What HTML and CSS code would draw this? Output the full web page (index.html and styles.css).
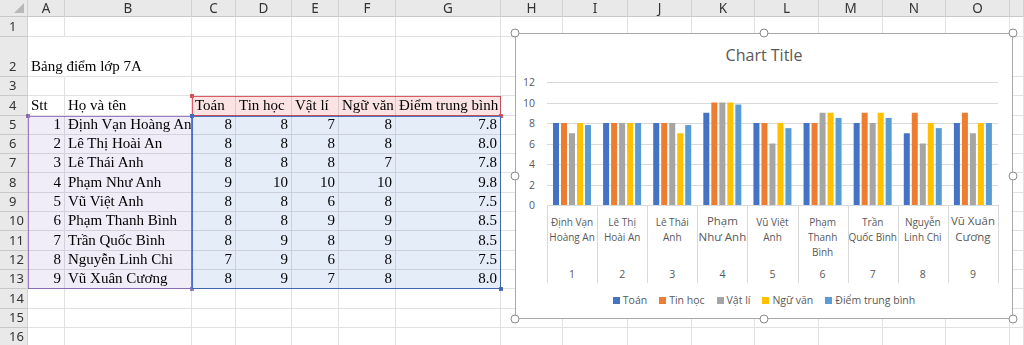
FILE: index.html
```html
<!DOCTYPE html>
<html lang="vi">
<head>
    <meta charset="UTF-8">
    <meta name="viewport" content="width=device-width, initial-scale=1.0">
    <title>Bảng điểm lớp 7A</title>
    <link rel="stylesheet" href="styles.css">
</head>
<body>
    <div class="workbook">
        <div class="cells" id="cells"></div>

        <!-- vùng dữ liệu của biểu đồ -->
        <div class="ranges">
            <div class="range range-series"></div>
            <div class="range range-names"></div>
            <div class="range range-values"></div>
        </div>

        <div class="chart">
            <div class="chart-title">Chart Title</div>
            <svg id="plot" class="plot" width="496" height="218" viewBox="0 0 496 218"></svg>
            <div class="legend">
                <span class="key"><i class="swatch s1"></i>Toán</span>
                <span class="key"><i class="swatch s2"></i>Tin học</span>
                <span class="key"><i class="swatch s3"></i>Vật lí</span>
                <span class="key"><i class="swatch s4"></i>Ngữ văn</span>
                <span class="key"><i class="swatch s5"></i>Điểm trung bình</span>
            </div>
            <span class="handle h-tl"></span>
            <span class="handle h-tc"></span>
            <span class="handle h-tr"></span>
            <span class="handle h-ml"></span>
            <span class="handle h-mr"></span>
            <span class="handle h-bl"></span>
            <span class="handle h-bc"></span>
            <span class="handle h-br"></span>
        </div>
    </div>

    <script>
        const students = [
            ['Định Vạn Hoàng An', [8, 8, 7, 8, 7.8]],
            ['Lê Thị Hoài An', [8, 8, 8, 8, 8.0]],
            ['Lê Thái Anh', [8, 8, 8, 7, 7.8]],
            ['Phạm Như Anh', [9, 10, 10, 10, 9.8]],
            ['Vũ Việt Anh', [8, 8, 6, 8, 7.5]],
            ['Phạm Thanh Bình', [8, 8, 9, 9, 8.5]],
            ['Trần Quốc Bình', [8, 9, 8, 9, 8.5]],
            ['Nguyễn Linh Chi', [7, 9, 6, 8, 7.5]],
            ['Vũ Xuân Cương', [8, 9, 7, 8, 8.0]]
        ];
        const subjects = ['Toán', 'Tin học', 'Vật lí', 'Ngữ văn', 'Điểm trung bình'];
        const colors = ['#4472c4', '#ed7d31', '#a5a5a5', '#ffc000', '#5b9bd5'];

        // tên trên trục như Excel ngắt dòng
        const axisNames = [
            ['Định Vạn', 'Hoàng An'], ['Lê Thị', 'Hoài An'], ['Lê Thái', 'Anh'],
            ['Phạm', 'Như Anh'], ['Vũ Việt', 'Anh'], ['Phạm', 'Thanh', 'Bình'],
            ['Trần', 'Quốc Bình'], ['Nguyễn', 'Linh Chi'], ['Vũ Xuân', 'Cương']
        ];
        const bigLabels = [3, 8];

        // Nội dung ô
        function cellContent(r, c) {
            if (r === 2 && c === 0) return ['Bảng điểm lớp 7A', 'spill'];
            if (r === 4) return [['Stt', 'Họ và tên', ...subjects][c] || '', ''];
            if (r >= 5 && r <= 13) {
                const s = students[r - 5];
                if (c === 0) return [r - 4, 'num'];
                if (c === 1) return [s[0], ''];
                if (c >= 2 && c <= 6) {
                    const v = s[1][c - 2];
                    return [c === 6 ? v.toFixed(1) : v, 'num'];
                }
            }
            return ['', ''];
        }

        function buildSheet() {
            const grid = document.getElementById('cells');
            const letters = ['', 'A', 'B', 'C', 'D', 'E', 'F', 'G', 'H', 'I', 'J', 'K', 'L', 'M', 'N', 'O', ''];

            letters.forEach((l, i) => {
                const d = document.createElement('div');
                d.className = i === 0 ? 'head corner' : 'head col-head';
                d.textContent = l;
                grid.appendChild(d);
            });

            for (let r = 1; r <= 16; r++) {
                const rh = document.createElement('div');
                rh.className = 'head row-head';
                rh.textContent = r;
                grid.appendChild(rh);

                for (let c = 0; c < 16; c++) {
                    const [text, cls] = cellContent(r, c);
                    const d = document.createElement('div');
                    d.className = 'cell ' + cls;
                    d.textContent = text;
                    grid.appendChild(d);
                }
            }
        }

        // Biểu đồ cột
        function svgEl(tag, attrs, text) {
            const e = document.createElementNS('http://www.w3.org/2000/svg', tag);
            for (const k in attrs) e.setAttribute(k, attrs[k]);
            if (text !== undefined) e.textContent = text;
            return e;
        }

        function buildChart() {
            const svg = document.getElementById('plot');
            const x0 = 31, width = 451, catW = width / 9;
            const yOf = v => 136 - v * 10.25;

            for (let v = 0; v <= 12; v += 2) {
                const y = Math.round(yOf(v)) + 0.5;
                svg.appendChild(svgEl('line', { x1: x0, x2: x0 + width, y1: y, y2: y, class: 'grid' }));
                svg.appendChild(svgEl('text', { x: 19, y: yOf(v), class: 'ylabel' }, v));
            }

            students.forEach((s, i) => {
                s[1].forEach((v, j) => {
                    svg.appendChild(svgEl('rect', {
                        x: x0 + i * catW + 6 + j * 8,
                        y: yOf(v),
                        width: 6,
                        height: v * 10.25,
                        fill: colors[j]
                    }));
                });

                const cx = x0 + (i + 0.5) * catW;
                const big = bigLabels.includes(i);
                const lines = big ? [151, 167] : [153, 168, 183];
                axisNames[i].forEach((t, k) => {
                    svg.appendChild(svgEl('text', { x: cx, y: lines[k], class: big ? 'cat big' : 'cat' }, t));
                });
                svg.appendChild(svgEl('text', { x: cx, y: 205, class: 'cat outer' }, i + 1));
            });

            for (let i = 0; i <= 9; i++) {
                const x = Math.round(x0 + i * catW) + 0.5;
                svg.appendChild(svgEl('line', { x1: x, x2: x, y1: 136, y2: 214, class: 'grid' }));
            }
        }

        buildSheet();
        buildChart();
    </script>
</body>
</html>
```

FILE: styles.css
```css
body {
    margin: 0;
    background-color: #ffffff;
    overflow: hidden;
}
.workbook {
    position: relative;
    display: grid;
}
.cells, .ranges {
    grid-area: 1 / 1;
    display: grid;
    grid-template-columns: 28px 37px 127px 44px 56px 47px 57px 105px 62px 65px 64px 63px 64px 64px 63px 64px 1fr;
    grid-template-rows: 17px 20px 40px repeat(14, 19.3px);
}

/* Tiêu đề cột và hàng */
.head {
    background-color: #e9e9e9;
    border-right: 1px solid #d2d2d2;
    border-bottom: 1px solid #c8c8c8;
    font: 13.5px "Noto Sans", sans-serif;
    color: #333333;
    display: flex;
    overflow: hidden;
}
.col-head {
    align-items: center;
    justify-content: center;
    line-height: 16px;
}
.row-head {
    align-items: flex-end;
    padding: 0 0 2px 9px;
    line-height: 16px;
    font-size: 13px;
}
.corner {
    position: relative;
}
.corner::after {
    content: "";
    position: absolute;
    right: 3px;
    bottom: 3px;
    border-left: 10px solid transparent;
    border-bottom: 10px solid #b8b8b8;
}

/* Ô */
.cell {
    border-right: 1px solid #e1e1e1;
    border-bottom: 1px solid #e1e1e1;
    font: 15px "Liberation Serif", "Times New Roman", serif;
    color: #000000;
    display: flex;
    align-items: flex-end;
    padding: 0 3px 1px;
    line-height: 17px;
    white-space: nowrap;
    overflow: hidden;
    min-width: 0;
}
.cell.num {
    justify-content: flex-end;
}
.cell.spill {
    overflow: visible;
    border-right-color: transparent;
}

/* Vùng dữ liệu được chọn */
.ranges {
    mix-blend-mode: multiply;
    pointer-events: none;
}
.range {
    position: relative;
    border: 1px solid;
}
.range::before, .range::after {
    content: "";
    position: absolute;
    width: 4px;
    height: 4px;
    background-color: inherit;
}
.range::before {
    left: -3px;
    top: -3px;
}
.range::after {
    right: -3px;
    bottom: -3px;
}
.range-series {
    grid-column: 4 / 9;
    grid-row: 5 / 6;
    background-color: #fbe3e3;
    border-color: #dc5a66;
}
.range-series::before, .range-series::after {
    background-color: #dc5a66;
}
.range-names {
    grid-column: 2 / 4;
    grid-row: 6 / 15;
    background-color: #f1edf8;
    border-color: #9a7cc9;
}
.range-names::before, .range-names::after {
    background-color: #9a7cc9;
}
.range-values {
    grid-column: 4 / 9;
    grid-row: 6 / 15;
    background-color: #e5edf9;
    border-color: #4a74c2;
}
.range-values::before, .range-values::after {
    background-color: #4a74c2;
}

/* Biểu đồ */
.chart {
    position: absolute;
    left: 515px;
    top: 33px;
    width: 498px;
    height: 286px;
    box-sizing: border-box;
    border: 1px solid #a9a9a9;
    background-color: #ffffff;
    display: flex;
    flex-direction: column;
    font-family: "Open Sans", sans-serif;
    color: #595959;
}
.chart-title {
    height: 35px;
    box-sizing: border-box;
    padding-top: 6px;
    line-height: 30px;
    text-align: center;
    font-size: 16px;
}
.plot {
    display: block;
}
.plot .grid {
    stroke: #d9d9d9;
    stroke-width: 1;
    shape-rendering: crispEdges;
}
.plot text {
    fill: #595959;
    font-family: "Open Sans", sans-serif;
    dominant-baseline: central;
}
.plot .ylabel {
    font-size: 10.5px;
    text-anchor: end;
}
.plot .cat {
    font-size: 10px;
    text-anchor: middle;
}
.plot .cat.big {
    font-size: 11.5px;
}
.plot .cat.outer {
    font-size: 10.5px;
}
.legend {
    height: 26px;
    display: flex;
    align-items: center;
    justify-content: center;
    gap: 12px;
    font-size: 10.5px;
}
.key {
    display: flex;
    align-items: center;
}
.swatch {
    width: 7px;
    height: 7px;
    margin-right: 3px;
}
.s1 { background-color: #4472c4; }
.s2 { background-color: #ed7d31; }
.s3 { background-color: #a5a5a5; }
.s4 { background-color: #ffc000; }
.s5 { background-color: #5b9bd5; }

/* Nút kéo của biểu đồ */
.handle {
    position: absolute;
    width: 9px;
    height: 9px;
    box-sizing: border-box;
    border: 1px solid #8a8a8a;
    border-radius: 50%;
    background-color: #ffffff;
    transform: translate(-50%, -50%);
}
.h-tl { left: -1px; top: -1px; }
.h-tc { left: 50%; top: -1px; }
.h-tr { left: calc(100% + 1px); top: -1px; }
.h-ml { left: -1px; top: 50%; }
.h-mr { left: calc(100% + 1px); top: 50%; }
.h-bl { left: -1px; top: calc(100% + 1px); }
.h-bc { left: 50%; top: calc(100% + 1px); }
.h-br { left: calc(100% + 1px); top: calc(100% + 1px); }
```
